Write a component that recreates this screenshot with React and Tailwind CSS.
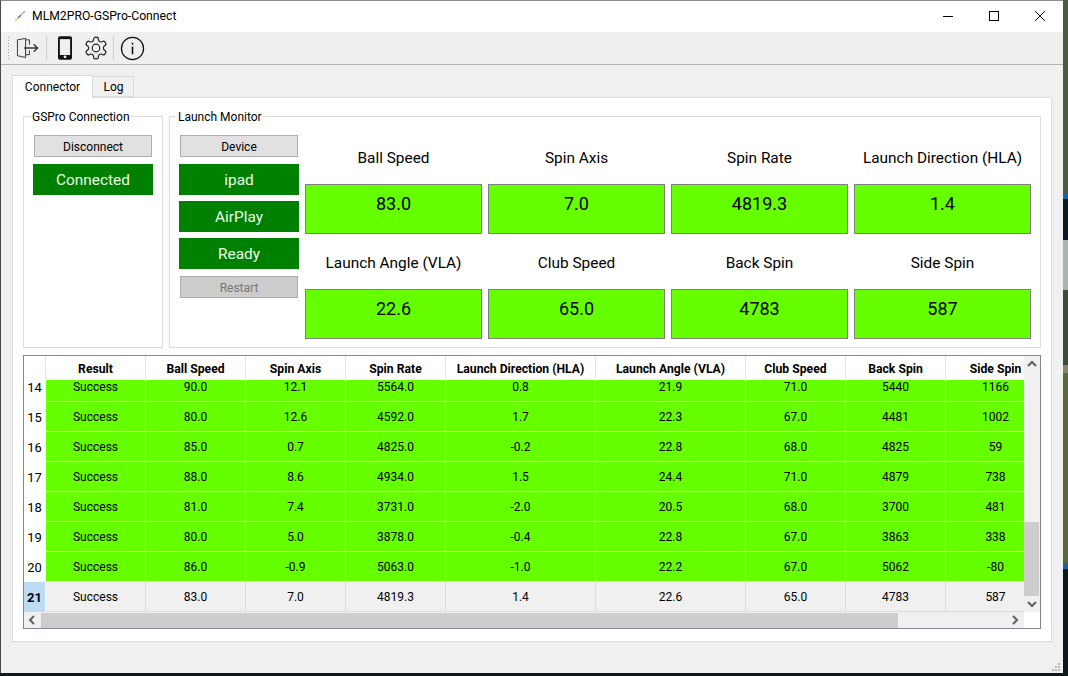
import React from 'react';

const columns = [
  { label: 'Result', w: 'w-[100px]' },
  { label: 'Ball Speed', w: 'w-[100px]' },
  { label: 'Spin Axis', w: 'w-[100px]' },
  { label: 'Spin Rate', w: 'w-[100px]' },
  { label: 'Launch Direction (HLA)', w: 'w-[150px]' },
  { label: 'Launch Angle (VLA)', w: 'w-[150px]' },
  { label: 'Club Speed', w: 'w-[100px]' },
  { label: 'Back Spin', w: 'w-[100px]' },
  { label: 'Side Spin', w: 'w-[100px]' },
];

const rows = [
  ['14', 'Success', '90.0', '12.1', '5564.0', '0.8', '21.9', '71.0', '5440', '1166'],
  ['15', 'Success', '80.0', '12.6', '4592.0', '1.7', '22.3', '67.0', '4481', '1002'],
  ['16', 'Success', '85.0', '0.7', '4825.0', '-0.2', '22.8', '68.0', '4825', '59'],
  ['17', 'Success', '88.0', '8.6', '4934.0', '1.5', '24.4', '71.0', '4879', '738'],
  ['18', 'Success', '81.0', '7.4', '3731.0', '-2.0', '20.5', '68.0', '3700', '481'],
  ['19', 'Success', '80.0', '5.0', '3878.0', '-0.4', '22.8', '67.0', '3863', '338'],
  ['20', 'Success', '86.0', '-0.9', '5063.0', '-1.0', '22.2', '67.0', '5062', '-80'],
  ['21', 'Success', '83.0', '7.0', '4819.3', '1.4', '22.6', '65.0', '4783', '587'],
];

const metricsTop = [
  ['Ball Speed', '83.0'],
  ['Spin Axis', '7.0'],
  ['Spin Rate', '4819.3'],
  ['Launch Direction (HLA)', '1.4'],
];

const metricsBottom = [
  ['Launch Angle (VLA)', '22.6'],
  ['Club Speed', '65.0'],
  ['Back Spin', '4783'],
  ['Side Spin', '587'],
];

const Metric = ({ label, value }) => (
  <div className="w-[177px] flex flex-col">
    <div className="h-[51px] flex items-center justify-center text-[15.4px] text-black">{label}</div>
    <div className="h-[50px] pb-[11px] bg-[#66ff00] border border-[#7f7f7f] flex items-center justify-center text-[18px] text-black">{value}</div>
  </div>
);

const StatusBox = ({ children }) => (
  <div className="h-[31px] w-[120px] pt-[3px] bg-[#008000] flex items-center justify-center text-[15.4px] text-[#eaffea]">{children}</div>
);

const Btn = ({ children, disabled }) => (
  <div className={`h-[22px] w-[118px] mx-px pt-px border border-[#adadad] flex items-center justify-center text-[12px] ${disabled ? 'bg-[#cccccc] text-[#787878]' : 'bg-[#e1e1e1] text-black'}`}>
    {children}
  </div>
);

const Group = ({ title, className, children }) => (
  <div className={`relative border border-[#dcdcdc] h-[232px] ${className}`}>
    <span className="absolute left-[7px] -top-[8px] bg-white px-px text-[12px] leading-[16px] text-black">{title}</span>
    {children}
  </div>
);

const Chevron = ({ d }) => (
  <svg className="shrink-0" width="16" height="16" viewBox="0 0 16 16" fill="none" stroke="#606060" strokeWidth="2">
    <path d={d} />
  </svg>
);

const Grid = () => (
  <div className="mt-[7px] h-[274px] border border-[#828790] bg-white flex flex-col text-[12px] text-black">
    <div className="flex h-[256px]">
      <div className="w-[1000px] overflow-hidden flex flex-col">
        <div className="flex h-[24px] shrink-0 font-bold text-[12.2px] bg-white">
          <div className="w-[22px] shrink-0 border-r border-[#e5e5e5]" />
          {columns.map((c) => (
            <div key={c.label} className={`${c.w} pt-[2px] shrink-0 border-r border-[#e5e5e5] flex items-center justify-center`}>{c.label}</div>
          ))}
        </div>
        {rows.map((r, i) => {
          const last = i === rows.length - 1;
          return (
            <div key={r[0]} className={`flex shrink-0 items-end overflow-hidden ${i === 0 ? 'h-[22px]' : 'h-[30px]'}`}>
              <div className={`w-[22px] h-[30px] pt-px shrink-0 flex items-center justify-center text-[13px] border-r border-white ${last ? 'bg-[#bcdcf4] font-bold' : 'bg-white'}`}>{r[0]}</div>
              {r.slice(1).map((v, j) => (
                <div
                  key={j}
                  className={`${columns[j].w} h-[30px] shrink-0 flex items-center justify-center border-r border-b ${last ? 'bg-[#f0f0f0] border-[#dcdcdc]' : 'bg-[#66ff00] border-[#e3f2d8]'}`}
                >
                  {v}
                </div>
              ))}
            </div>
          );
        })}
      </div>
      <div className="w-[16px] ml-auto bg-[#f0f0f0] flex flex-col">
        <Chevron d="M4 10l4-4 4 4" />
        <div className="flex-1 flex flex-col justify-end">
          <div className="h-[74px] w-[15px] bg-[#cdcdcd]" />
        </div>
        <Chevron d="M4 6l4 4 4-4" />
      </div>
    </div>
    <div className="flex h-[16px] bg-[#f0f0f0] items-center">
      <div className="w-[17px]"><Chevron d="M10 4l-4 4 4 4" /></div>
      <div className="w-[857px] h-[15px] bg-[#cdcdcd]" />
      <div className="flex-1" />
      <div className="mr-[1px]"><Chevron d="M6 4l4 4-4 4" /></div>
      <div className="w-[16px] h-full bg-white" />
    </div>
  </div>
);

const ToolbarIcons = () => (
  <div className="flex h-[32px] items-center bg-[#efefef] border-b border-[#b4b4b4] box-content">
    <div className="ml-[7px] w-[3px] h-[24px] bg-[radial-gradient(#a0a0a0_1px,transparent_1px)] bg-[length:3px_3px]" />
    <svg className="ml-[6px]" width="23" height="24" viewBox="0 0 24 24" fill="none" stroke="#333" strokeWidth="1">
      <path d="M1.500 3.500l8.500-1.500v20l-8.500-2zM10 3.500h4v5M14 14.500v4.500h-4" />
      <path d="M8.500 12h14M18.500 8l4 4-4 4" strokeWidth="1.400" />
    </svg>
    <div className="ml-[7px] w-px h-[24px] bg-[#d0d0d0]" />
    <svg className="ml-[11px]" width="14" height="24" viewBox="0 0 15 25">
      <rect x="0" y="0" width="15" height="25" rx="2" fill="#111" />
      <rect x="2" y="3" width="11" height="17" fill="#efefef" />
      <circle cx="7.500" cy="22" r="1.500" fill="#efefef" />
    </svg>
    <svg className="ml-[11px]" width="26" height="26" viewBox="0 0 24 24" fill="none" stroke="#222" strokeWidth="1.100" strokeLinecap="round" strokeLinejoin="round">
      <path d="M12.220 2h-.440a2 2 0 0 0-2 2v.180a2 2 0 0 1-1 1.730l-.430.250a2 2 0 0 1-2 0l-.150-.080a2 2 0 0 0-2.730.730l-.220.380a2 2 0 0 0 .730 2.730l.150.100a2 2 0 0 1 1 1.720v.510a2 2 0 0 1-1 1.740l-.150.090a2 2 0 0 0-.730 2.730l.220.380a2 2 0 0 0 2.730.730l.150-.080a2 2 0 0 1 2 0l.430.250a2 2 0 0 1 1 1.730V20a2 2 0 0 0 2 2h.440a2 2 0 0 0 2-2v-.180a2 2 0 0 1 1-1.730l.430-.250a2 2 0 0 1 2 0l.150.080a2 2 0 0 0 2.730-.730l.220-.390a2 2 0 0 0-.730-2.730l-.150-.080a2 2 0 0 1-1-1.740v-.500a2 2 0 0 1 1-1.740l.150-.090a2 2 0 0 0 .730-2.730l-.220-.380a2 2 0 0 0-2.730-.730l-.150.080a2 2 0 0 1-2 0l-.430-.250a2 2 0 0 1-1-1.730V4a2 2 0 0 0-2-2z" />
      <circle cx="12" cy="12" r="3.500" />
    </svg>
    <div className="ml-[4px] w-px h-[24px] bg-[#d0d0d0]" />
    <svg className="ml-[6px]" width="25" height="25" viewBox="0 0 26 26" fill="none" stroke="#111" strokeWidth="1.300">
      <circle cx="13" cy="13" r="11.500" />
      <path d="M13 11v8" strokeWidth="1.600" />
      <path d="M13 7v2" strokeWidth="1.600" />
    </svg>
  </div>
);

export default function App() {
  return (
    <div className="w-[1068px] h-[676px] overflow-hidden bg-[#0a1a1c] flex font-['Roboto',sans-serif]">
      <div className="w-[1063px] h-[673px] shrink-0 bg-[#f0f0f0] flex flex-col relative">
        {/* title bar */}
        <div className="h-[32px] bg-white flex items-center shrink-0">
          <svg className="ml-[14px]" width="12" height="12" viewBox="0 0 12 12" fill="none" strokeWidth="1.400">
            <path d="M1 11l3-3" stroke="#f0c860" />
            <path d="M4 8l3-3" stroke="#3f70c8" />
            <path d="M7 5l4-4" stroke="#a0b8d8" />
          </svg>
          <span className="ml-[6px] text-[12.2px] text-black">MLM2PRO-GSPro-Connect</span>
          <div className="ml-auto flex items-center">
            <div className="w-[10px] h-px bg-black mr-[36px]" />
            <div className="w-[10px] h-[10px] border border-black mr-[36px]" />
            <svg className="mr-[18px]" width="10" height="10" viewBox="0 0 10 10" stroke="#111" strokeWidth="1">
              <path d="M0 0l10 10M10 0L0 10" />
            </svg>
          </div>
        </div>

        <ToolbarIcons />

        {/* tabs */}
        <div className="flex items-end h-[32px] pl-[12px] text-[12px] text-black shrink-0">
          <div className="w-[81px] h-[23px] bg-white border border-b-0 border-[#dcdcdc] flex items-center justify-center relative top-px z-10">Connector</div>
          <div className="w-[41px] h-[21px] pt-px pl-px bg-[#f0f0f0] border border-l-0 border-[#dcdcdc] flex items-center justify-center">Log</div>
        </div>

        {/* tab page */}
        <div className="ml-[12px] w-[1040px] h-[545px] bg-white border border-[#dcdcdc] px-[10px] pt-[18px]">
          <div className="flex gap-[6px]">
            <Group title="GSPro Connection" className="w-[140px] shrink-0">
              <div className="pt-[18px] pl-[9px] flex flex-col gap-[7px]">
                <Btn>Disconnect</Btn>
                <StatusBox>Connected</StatusBox>
              </div>
            </Group>
            <Group title="Launch Monitor" className="w-[872px] shrink-0 flex">
              <div className="pt-[18px] pl-[9px] flex flex-col gap-[6px] shrink-0">
                <div className="mb-px"><Btn>Device</Btn></div>
                <StatusBox>ipad</StatusBox>
                <StatusBox>AirPlay</StatusBox>
                <StatusBox>Ready</StatusBox>
                <div className="mt-px"><Btn disabled>Restart</Btn></div>
              </div>
              <div className="pl-[6px] pt-[16px] flex flex-col gap-[4px]">
                <div className="flex gap-[6px]">
                  {metricsTop.map(([l, v]) => <Metric key={l} label={l} value={v} />)}
                </div>
                <div className="flex gap-[6px]">
                  {metricsBottom.map(([l, v]) => <Metric key={l} label={l} value={v} />)}
                </div>
              </div>
            </Group>
          </div>
          <Grid />
        </div>

        {/* window edge lines */}
        <div className="absolute inset-0 border-t border-l border-t-[#8f8f8f] border-l-[#4a4a4a] pointer-events-none" />

        {/* size grip */}
        <svg className="absolute left-[1052px] top-[663px]" width="8" height="8" viewBox="0 0 8 8" fill="#b8b8b8">
          <rect x="6" y="0" width="2" height="2" />
          <rect x="3" y="3" width="2" height="2" />
          <rect x="6" y="3" width="2" height="2" />
          <rect x="0" y="6" width="2" height="2" />
          <rect x="3" y="6" width="2" height="2" />
          <rect x="6" y="6" width="2" height="2" />
        </svg>
      </div>

      {/* bit of desktop wallpaper showing to the right of the window */}
      <div className="w-[5px] h-full flex flex-col shrink-0">
        <div className="h-[193px] bg-[#4e5a3c]" />
        <div className="h-[6px] bg-[#1565a0]" />
        <div className="h-[41px] bg-[#0a1a22]" />
        <div className="h-[50px] bg-[#a8b4ae]" />
        <div className="h-[75px] bg-[#3c4a38]" />
        <div className="h-[8px] bg-[#8a8468]" />
        <div className="h-[190px] bg-[#55683a]" />
        <div className="h-[6px] bg-[#1565a0]" />
        <div className="flex-1 bg-[#0a1a1c]" />
      </div>
    </div>
  );
}
